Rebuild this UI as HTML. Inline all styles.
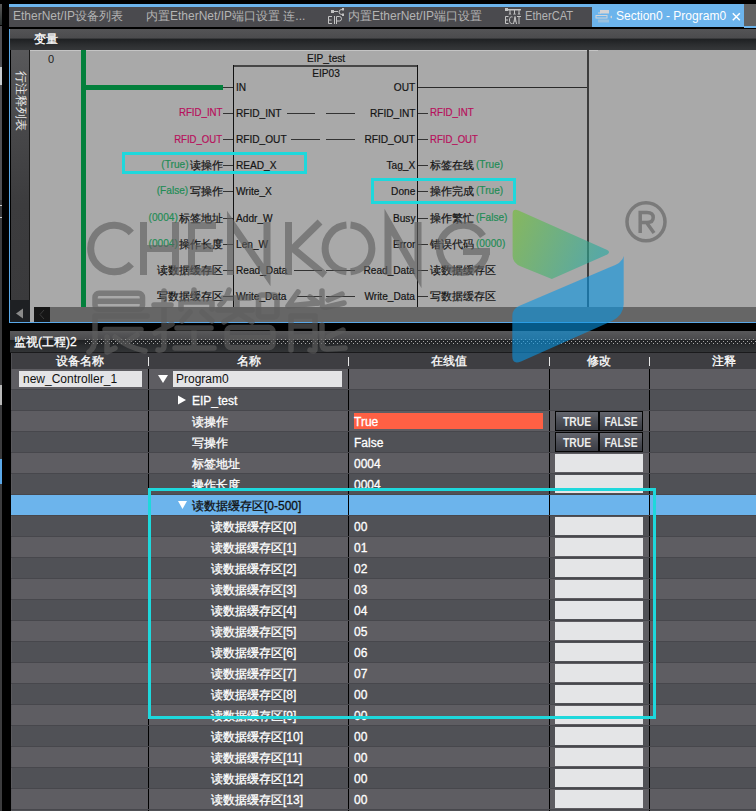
<!DOCTYPE html>
<html><head><meta charset="utf-8">
<style>
*{margin:0;padding:0;box-sizing:border-box}
html,body{width:756px;height:811px;overflow:hidden;background:#000}
body{position:relative;font-family:"Liberation Sans",sans-serif;font-size:12px}
.a{position:absolute}
.t{position:absolute;white-space:nowrap}
svg{position:absolute;left:0;top:0}
</style></head><body>
<div class="a" style="left:0px;top:0px;width:2px;height:811px;background:#3c3c3e;"></div>
<div class="a" style="left:0px;top:0px;width:2px;height:4px;background:#000;"></div>
<div class="a" style="left:0px;top:4px;width:2px;height:21px;background:linear-gradient(#5a5a5a,#2a3030);"></div>
<div class="a" style="left:0px;top:25px;width:2px;height:1px;background:#000;"></div>
<div class="a" style="left:0px;top:26px;width:2px;height:41px;background:#505054;"></div>
<div class="a" style="left:0px;top:67px;width:2px;height:18px;background:#c8ccd0;"></div>
<div class="a" style="left:0px;top:85px;width:2px;height:115px;background:#505054;"></div>
<div class="a" style="left:0px;top:385px;width:2px;height:20px;background:#b8b8b8;"></div>
<div class="a" style="left:0px;top:459px;width:2px;height:25px;background:#5aa8e8;"></div>
<div class="a" style="left:0px;top:205px;width:2px;height:1px;background:#d0d0d0;"></div>
<div class="a" style="left:0px;top:217px;width:2px;height:1px;background:#d0d0d0;"></div>
<div class="a" style="left:9px;top:4px;width:747px;height:3px;background:#6cb4ec;"></div>
<div class="a" style="left:9px;top:7px;width:747px;height:20px;background:#4a4a4e;"></div>
<div class="t" style="top:8.5px;color:#b4b4b4;font-size:12px;line-height:14px;left:13px;">EtherNet/IP设备列表</div>
<div class="t" style="top:8.5px;color:#b4b4b4;font-size:12px;line-height:14px;left:146px;">内置EtherNet/IP端口设置 连...</div>
<div class="t" style="top:8.5px;color:#b4b4b4;font-size:12px;line-height:14px;left:348px;">内置EtherNet/IP端口设置</div>
<div class="t" style="top:8.5px;color:#b4b4b4;font-size:12px;line-height:14px;left:525px;transform:scaleX(0.93);transform-origin:0 0;">EtherCAT</div>
<div class="a" style="left:592px;top:4px;width:152px;height:23px;background:#6cb4ec;"></div>
<div class="t" style="top:8.5px;color:#fff;font-size:12px;line-height:14px;left:616px;">Section0 - Program0</div>
<svg width="756" height="40" style="left:0;top:0"><path d="M732.8 13.2 L739.8 20.2 M739.8 13.2 L732.8 20.2" stroke="#fff" stroke-width="1.5"/></svg>
<svg width="756" height="30" style="left:0;top:0">
<g fill="#c4c4c4">
<rect x="331" y="10" width="3" height="3"/><rect x="334" y="11" width="4" height="1"/>
<rect x="342" y="8" width="2" height="2.5"/><rect x="342" y="13.5" width="2" height="2.5"/>
</g>
<g fill="none" stroke="#c4c4c4" stroke-width="1">
<path d="M342 9.5 Q339 9.5 339 12 Q339 14.5 342 14.5"/>
<path d="M332 16.5 H328.5 V23.5 H332 M328.5 20 H331.5 M334.5 16 V24 M336.5 24 V16.5 H339.5 Q341.5 16.5 341.5 18.75 Q341.5 21 339.5 21 H336.5"/>
</g>
<g fill="#c4c4c4">
<rect x="505" y="8" width="3" height="3"/><rect x="508" y="9" width="13" height="1.5"/>
<rect x="509.5" y="10" width="1" height="3"/><rect x="514" y="10" width="1" height="3"/><rect x="518.5" y="10" width="1" height="3"/>
<path d="M508.5 14.5 L510 12.5 L511.5 14.5 Z M513 14.5 L514.5 12.5 L516 14.5 Z M517.5 14.5 L519 12.5 L520.5 14.5 Z"/>
</g>
<g fill="none" stroke="#c4c4c4" stroke-width="1">
<path d="M508.5 16.5 H505.5 V23.5 H508.5 M505.5 20 H508 M512.5 17 Q509.5 16 509.5 20 Q509.5 24 512.5 23.5 M513.5 24 L515 16.5 L516.5 24 M514 21 H516 M517 16.5 H521 M519 16.5 V24"/>
</g>
<g fill="#d4d4d6">
<rect x="600" y="10" width="9" height="3.5"/><rect x="598" y="12.5" width="3" height="1"/>
<rect x="596" y="15.5" width="11" height="2.5" fill="none" stroke="#d4d4d6" stroke-width="1"/>
<path d="M610 17 L612 15.5 V18.5 Z"/>
<rect x="598" y="19.5" width="11" height="3" fill="#b8c8d4" opacity="0.6"/>
</g>
</svg>
<div class="a" style="left:9px;top:27px;width:747px;height:2px;background:#000;"></div>
<div class="a" style="left:744px;top:4px;width:12px;height:22px;background:#626262;"></div>
<div class="a" style="left:744px;top:26px;width:12px;height:1.5px;background:#6cb4ec;"></div>
<div class="a" style="left:9px;top:29px;width:1px;height:294px;background:#5aa8e8;"></div>
<div class="a" style="left:10px;top:29px;width:746px;height:21px;background:linear-gradient(#545456 0%,#4b4b4d 44%,#1e2022 47%,#2c2e30 75%,#353739 100%);"></div>
<div class="t" style="top:31.9px;color:#fff;font-size:12px;line-height:14px;left:34px;-webkit-text-stroke:0.3px currentColor;">变量</div>
<div class="a" style="left:11px;top:50px;width:18px;height:257px;background:linear-gradient(#59595b,#48484a 30%,#3c3c3e 60%,#3a3a3c);"></div>
<div class="a" style="left:29px;top:50px;width:1px;height:257px;background:#1a1a1a;"></div>
<div class="t" style="left:15px;top:70.5px;width:12px;height:12px;font-size:12px;line-height:12px;color:#e8e8e8;transform:rotate(90deg)">行</div>
<div class="t" style="left:15px;top:82.5px;width:12px;height:12px;font-size:12px;line-height:12px;color:#e8e8e8;transform:rotate(90deg)">注</div>
<div class="t" style="left:15px;top:94.5px;width:12px;height:12px;font-size:12px;line-height:12px;color:#e8e8e8;transform:rotate(90deg)">释</div>
<div class="t" style="left:15px;top:106.5px;width:12px;height:12px;font-size:12px;line-height:12px;color:#e8e8e8;transform:rotate(90deg)">列</div>
<div class="t" style="left:15px;top:118.5px;width:12px;height:12px;font-size:12px;line-height:12px;color:#e8e8e8;transform:rotate(90deg)">表</div>
<div class="a" style="left:30px;top:50px;width:726px;height:257px;background:#a9a9a9;"></div>
<div class="a" style="left:30px;top:50px;width:568px;height:1px;background:#c4c4c4;"></div>
<div class="a" style="left:10px;top:307px;width:746px;height:15px;background:#666666;"></div>
<div class="a" style="left:10px;top:300px;width:20px;height:22px;background:#1e2023;"></div>
<svg width="40" height="330" style="left:0;top:0"><path d="M16 313.5 L23 308.5 L23 318.5 Z" fill="#8a8a8a"/></svg>
<div class="a" style="left:30px;top:307px;width:4px;height:15px;background:#a9a9a9;"></div>
<div class="a" style="left:34px;top:307px;width:16px;height:15px;background:#161616;"></div>
<svg width="60" height="330" style="left:0;top:0"><path d="M44 310 L40 314.5 L44 319" fill="none" stroke="#3a3a3a" stroke-width="1"/></svg>
<div class="a" style="left:10px;top:322px;width:746px;height:1px;background:#5aa8e8;"></div>
<svg width="756" height="811"><rect x="81" y="50" width="5" height="257" fill="#03803c"/><rect x="86" y="85" width="137" height="5" fill="#03803c"/><rect x="233" y="65" width="185" height="2" fill="#464646"/><rect x="233" y="65" width="1" height="242" fill="#111"/><rect x="417" y="65" width="1" height="242" fill="#111"/><rect x="587" y="50" width="2" height="257" fill="#3c3c3c"/><rect x="418" y="87" width="169" height="1" fill="#2a2a2a"/><rect x="223" y="87" width="10" height="1" fill="#333"/><rect x="223" y="113" width="10" height="1" fill="#333"/><rect x="418" y="113" width="10" height="1" fill="#333"/><rect x="223" y="139" width="10" height="1" fill="#333"/><rect x="418" y="139" width="10" height="1" fill="#333"/><rect x="223" y="165" width="10" height="1" fill="#333"/><rect x="418" y="165" width="10" height="1" fill="#333"/><rect x="223" y="191" width="10" height="1" fill="#333"/><rect x="418" y="191" width="10" height="1" fill="#333"/><rect x="223" y="218" width="10" height="1" fill="#333"/><rect x="418" y="218" width="10" height="1" fill="#333"/><rect x="223" y="244" width="10" height="1" fill="#333"/><rect x="418" y="244" width="10" height="1" fill="#333"/><rect x="223" y="270" width="10" height="1" fill="#333"/><rect x="418" y="270" width="10" height="1" fill="#333"/><rect x="223" y="296" width="10" height="1" fill="#333"/><rect x="418" y="296" width="10" height="1" fill="#333"/><rect x="287" y="113" width="28" height="1" fill="#333"/><rect x="326" y="113" width="29" height="1" fill="#333"/><rect x="291" y="139" width="29" height="1" fill="#333"/><rect x="326" y="139" width="29" height="1" fill="#333"/><rect x="294" y="270" width="28" height="1" fill="#333"/><rect x="326" y="270" width="29" height="1" fill="#333"/><rect x="297" y="296" width="25" height="1" fill="#333"/><rect x="326" y="296" width="29" height="1" fill="#333"/></svg>
<div class="t" style="top:53.0px;color:#222;font-size:11px;line-height:13px;left:48px;">0</div>
<div class="t" style="top:52.0px;color:#141414;font-size:11px;line-height:13px;left:325.8px;width:0;display:flex;justify-content:center;transform:scaleX(0.92);-webkit-text-stroke:0.2px currentColor;">EIP_test</div>
<div class="t" style="top:67.0px;color:#141414;font-size:11px;line-height:13px;left:325.7px;width:0;display:flex;justify-content:center;transform:scaleX(0.92);-webkit-text-stroke:0.2px currentColor;">EIP03</div>
<div class="t" style="top:81.0px;color:#141414;font-size:11px;line-height:13px;left:236px;transform:scaleX(0.92);transform-origin:0 0;-webkit-text-stroke:0.2px currentColor;">IN</div>
<div class="t" style="top:107.0px;color:#141414;font-size:11px;line-height:13px;left:236px;transform:scaleX(0.92);transform-origin:0 0;-webkit-text-stroke:0.2px currentColor;">RFID_INT</div>
<div class="t" style="top:133.0px;color:#141414;font-size:11px;line-height:13px;left:236px;transform:scaleX(0.92);transform-origin:0 0;-webkit-text-stroke:0.2px currentColor;">RFID_OUT</div>
<div class="t" style="top:159.0px;color:#141414;font-size:11px;line-height:13px;left:236px;transform:scaleX(0.92);transform-origin:0 0;-webkit-text-stroke:0.2px currentColor;">READ_X</div>
<div class="t" style="top:185.0px;color:#141414;font-size:11px;line-height:13px;left:236px;transform:scaleX(0.92);transform-origin:0 0;-webkit-text-stroke:0.2px currentColor;">Write_X</div>
<div class="t" style="top:212.0px;color:#141414;font-size:11px;line-height:13px;left:236px;transform:scaleX(0.92);transform-origin:0 0;-webkit-text-stroke:0.2px currentColor;">Addr_W</div>
<div class="t" style="top:238.0px;color:#141414;font-size:11px;line-height:13px;left:236px;transform:scaleX(0.92);transform-origin:0 0;-webkit-text-stroke:0.2px currentColor;">Len_W</div>
<div class="t" style="top:264.0px;color:#141414;font-size:11px;line-height:13px;left:236px;transform:scaleX(0.92);transform-origin:0 0;-webkit-text-stroke:0.2px currentColor;">Read_Data</div>
<div class="t" style="top:290.0px;color:#141414;font-size:11px;line-height:13px;left:236px;transform:scaleX(0.92);transform-origin:0 0;-webkit-text-stroke:0.2px currentColor;">Write_Data</div>
<div class="t" style="top:81.0px;color:#141414;font-size:11px;line-height:13px;right:341px;transform:scaleX(0.92);transform-origin:100% 0;-webkit-text-stroke:0.2px currentColor;">OUT</div>
<div class="t" style="top:107.0px;color:#141414;font-size:11px;line-height:13px;right:341px;transform:scaleX(0.92);transform-origin:100% 0;-webkit-text-stroke:0.2px currentColor;">RFID_INT</div>
<div class="t" style="top:133.0px;color:#141414;font-size:11px;line-height:13px;right:341px;transform:scaleX(0.92);transform-origin:100% 0;-webkit-text-stroke:0.2px currentColor;">RFID_OUT</div>
<div class="t" style="top:159.0px;color:#141414;font-size:11px;line-height:13px;right:341px;transform:scaleX(0.92);transform-origin:100% 0;-webkit-text-stroke:0.2px currentColor;">Tag_X</div>
<div class="t" style="top:185.0px;color:#141414;font-size:11px;line-height:13px;right:341px;transform:scaleX(0.92);transform-origin:100% 0;-webkit-text-stroke:0.2px currentColor;">Done</div>
<div class="t" style="top:212.0px;color:#141414;font-size:11px;line-height:13px;right:341px;transform:scaleX(0.92);transform-origin:100% 0;-webkit-text-stroke:0.2px currentColor;">Busy</div>
<div class="t" style="top:238.0px;color:#141414;font-size:11px;line-height:13px;right:341px;transform:scaleX(0.92);transform-origin:100% 0;-webkit-text-stroke:0.2px currentColor;">Error</div>
<div class="t" style="top:264.0px;color:#141414;font-size:11px;line-height:13px;right:341px;transform:scaleX(0.92);transform-origin:100% 0;-webkit-text-stroke:0.2px currentColor;">Read_Data</div>
<div class="t" style="top:290.0px;color:#141414;font-size:11px;line-height:13px;right:341px;transform:scaleX(0.92);transform-origin:100% 0;-webkit-text-stroke:0.2px currentColor;">Write_Data</div>
<div class="t" style="top:106.0px;color:#b8105c;font-size:11px;line-height:13px;right:534px;transform:scaleX(0.88);transform-origin:100% 0;-webkit-text-stroke:0.2px currentColor;">RFID_INT</div>
<div class="t" style="top:133.0px;color:#b8105c;font-size:11px;line-height:13px;right:534px;transform:scaleX(0.87);transform-origin:100% 0;-webkit-text-stroke:0.2px currentColor;">RFID_OUT</div>
<div class="t" style="top:159.0px;color:#141414;font-size:11px;line-height:13px;right:533.5px;-webkit-text-stroke:0.2px currentColor;">读操作</div>
<div class="t" style="top:158.0px;color:#1f8c55;font-size:11px;line-height:13px;right:567.5px;transform:scaleX(0.92);transform-origin:100% 0;-webkit-text-stroke:0.2px currentColor;">(True)</div>
<div class="t" style="top:185.0px;color:#141414;font-size:11px;line-height:13px;right:533.5px;-webkit-text-stroke:0.2px currentColor;">写操作</div>
<div class="t" style="top:184.0px;color:#1f8c55;font-size:11px;line-height:13px;right:567.5px;transform:scaleX(0.92);transform-origin:100% 0;-webkit-text-stroke:0.2px currentColor;">(False)</div>
<div class="t" style="top:212.0px;color:#141414;font-size:11px;line-height:13px;right:533.5px;-webkit-text-stroke:0.2px currentColor;">标签地址</div>
<div class="t" style="top:211.0px;color:#1f8c55;font-size:11px;line-height:13px;right:578.5px;transform:scaleX(0.92);transform-origin:100% 0;-webkit-text-stroke:0.2px currentColor;">(0004)</div>
<div class="t" style="top:238.0px;color:#141414;font-size:11px;line-height:13px;right:533.5px;-webkit-text-stroke:0.2px currentColor;">操作长度</div>
<div class="t" style="top:237.0px;color:#1f8c55;font-size:11px;line-height:13px;right:578.5px;transform:scaleX(0.92);transform-origin:100% 0;-webkit-text-stroke:0.2px currentColor;">(0004)</div>
<div class="t" style="top:264.0px;color:#141414;font-size:11px;line-height:13px;right:533.5px;-webkit-text-stroke:0.2px currentColor;">读数据缓存区</div>
<div class="t" style="top:290.0px;color:#141414;font-size:11px;line-height:13px;right:533.5px;-webkit-text-stroke:0.2px currentColor;">写数据缓存区</div>
<div class="t" style="top:106.0px;color:#b8105c;font-size:11px;line-height:13px;left:430px;transform:scaleX(0.88);transform-origin:0 0;-webkit-text-stroke:0.2px currentColor;">RFID_INT</div>
<div class="t" style="top:133.0px;color:#b8105c;font-size:11px;line-height:13px;left:430px;transform:scaleX(0.87);transform-origin:0 0;-webkit-text-stroke:0.2px currentColor;">RFID_OUT</div>
<div class="t" style="top:159.0px;color:#141414;font-size:11px;line-height:13px;left:429.5px;-webkit-text-stroke:0.2px currentColor;">标签在线</div>
<div class="t" style="top:158.0px;color:#1f8c55;font-size:11px;line-height:13px;left:475.5px;transform:scaleX(0.92);transform-origin:0 0;-webkit-text-stroke:0.2px currentColor;">(True)</div>
<div class="t" style="top:185.0px;color:#141414;font-size:11px;line-height:13px;left:429.5px;-webkit-text-stroke:0.2px currentColor;">操作完成</div>
<div class="t" style="top:184.0px;color:#1f8c55;font-size:11px;line-height:13px;left:475.5px;transform:scaleX(0.92);transform-origin:0 0;-webkit-text-stroke:0.2px currentColor;">(True)</div>
<div class="t" style="top:212.0px;color:#141414;font-size:11px;line-height:13px;left:429.5px;-webkit-text-stroke:0.2px currentColor;">操作繁忙</div>
<div class="t" style="top:211.0px;color:#1f8c55;font-size:11px;line-height:13px;left:475.5px;transform:scaleX(0.92);transform-origin:0 0;-webkit-text-stroke:0.2px currentColor;">(False)</div>
<div class="t" style="top:238.0px;color:#141414;font-size:11px;line-height:13px;left:429.5px;-webkit-text-stroke:0.2px currentColor;">错误代码</div>
<div class="t" style="top:237.0px;color:#1f8c55;font-size:11px;line-height:13px;left:475.5px;transform:scaleX(0.92);transform-origin:0 0;-webkit-text-stroke:0.2px currentColor;">(0000)</div>
<div class="t" style="top:264.0px;color:#141414;font-size:11px;line-height:13px;left:429.5px;-webkit-text-stroke:0.2px currentColor;">读数据缓存区</div>
<div class="t" style="top:290.0px;color:#141414;font-size:11px;line-height:13px;left:429.5px;-webkit-text-stroke:0.2px currentColor;">写数据缓存区</div>
<div class="a" style="left:10px;top:323px;width:746px;height:8px;background:#000;"></div>
<div class="a" style="left:10px;top:331px;width:746px;height:21px;background:linear-gradient(#59595b 0%,#4a4a4c 41%,#1e2022 45%,#2a2c2e 72%,#323436 100%);"></div>
<svg width="756" height="811"><defs><pattern id="dots" x="85" y="339" width="4" height="4" patternUnits="userSpaceOnUse"><rect x="0" y="0" width="1" height="1" fill="#a8a8a8"/><rect x="2" y="2" width="1" height="1" fill="#a8a8a8"/></pattern></defs><rect x="85" y="339" width="671" height="5" fill="url(#dots)"/></svg>
<div class="t" style="top:335.2px;color:#fff;font-size:12px;line-height:14px;left:14px;-webkit-text-stroke:0.3px currentColor;">监视(工程)2</div>
<div class="a" style="left:10px;top:352px;width:746px;height:1px;background:#1a1a1c;"></div>
<div class="a" style="left:11px;top:353px;width:745px;height:16px;background:#3e3e42;"></div>
<div class="a" style="left:11px;top:353px;width:1px;height:16px;background:#4e4e52;"></div>
<div class="t" style="top:353.8px;color:#fff;font-size:12px;line-height:14px;left:80.4px;width:0;display:flex;justify-content:center;-webkit-text-stroke:0.3px currentColor;">设备名称</div>
<div class="t" style="top:353.8px;color:#fff;font-size:12px;line-height:14px;left:248.5px;width:0;display:flex;justify-content:center;-webkit-text-stroke:0.3px currentColor;">名称</div>
<div class="t" style="top:353.8px;color:#fff;font-size:12px;line-height:14px;left:448.7px;width:0;display:flex;justify-content:center;-webkit-text-stroke:0.3px currentColor;">在线值</div>
<div class="t" style="top:353.8px;color:#fff;font-size:12px;line-height:14px;left:598.5px;width:0;display:flex;justify-content:center;-webkit-text-stroke:0.3px currentColor;">修改</div>
<div class="t" style="top:353.8px;color:#fff;font-size:12px;line-height:14px;left:723.5px;width:0;display:flex;justify-content:center;-webkit-text-stroke:0.3px currentColor;">注释</div>
<div class="a" style="left:148px;top:357px;width:1px;height:9px;background:#e8e8e8;"></div>
<div class="a" style="left:348px;top:357px;width:1px;height:9px;background:#e8e8e8;"></div>
<div class="a" style="left:549px;top:357px;width:1px;height:9px;background:#e8e8e8;"></div>
<div class="a" style="left:649px;top:357px;width:1px;height:9px;background:#e8e8e8;"></div>
<div class="a" style="left:11px;top:369px;width:745px;height:20px;background:#5e5d62;"></div>
<div class="a" style="left:11px;top:369px;width:1px;height:20px;background:#5a5a5e;"></div>
<div class="a" style="left:148px;top:369px;width:1px;height:20px;background:#000;"></div>
<div class="a" style="left:348px;top:369px;width:1px;height:20px;background:#000;"></div>
<div class="a" style="left:549px;top:369px;width:1px;height:20px;background:#000;"></div>
<div class="a" style="left:649px;top:369px;width:1px;height:20px;background:#000;"></div>
<div class="a" style="left:11px;top:389px;width:745px;height:1px;background:#47474c;"></div>
<div class="a" style="left:11px;top:390px;width:745px;height:20px;background:#505156;"></div>
<div class="a" style="left:11px;top:390px;width:1px;height:20px;background:#5a5a5e;"></div>
<div class="a" style="left:148px;top:390px;width:1px;height:20px;background:#000;"></div>
<div class="a" style="left:348px;top:390px;width:1px;height:20px;background:#000;"></div>
<div class="a" style="left:549px;top:390px;width:1px;height:20px;background:#000;"></div>
<div class="a" style="left:649px;top:390px;width:1px;height:20px;background:#000;"></div>
<div class="a" style="left:11px;top:410px;width:745px;height:1px;background:#47474c;"></div>
<div class="a" style="left:11px;top:411px;width:745px;height:20px;background:#5e5d62;"></div>
<div class="a" style="left:11px;top:411px;width:1px;height:20px;background:#5a5a5e;"></div>
<div class="a" style="left:148px;top:411px;width:1px;height:20px;background:#000;"></div>
<div class="a" style="left:348px;top:411px;width:1px;height:20px;background:#000;"></div>
<div class="a" style="left:549px;top:411px;width:1px;height:20px;background:#000;"></div>
<div class="a" style="left:649px;top:411px;width:1px;height:20px;background:#000;"></div>
<div class="a" style="left:11px;top:431px;width:745px;height:1px;background:#47474c;"></div>
<div class="a" style="left:11px;top:432px;width:745px;height:20px;background:#505156;"></div>
<div class="a" style="left:11px;top:432px;width:1px;height:20px;background:#5a5a5e;"></div>
<div class="a" style="left:148px;top:432px;width:1px;height:20px;background:#000;"></div>
<div class="a" style="left:348px;top:432px;width:1px;height:20px;background:#000;"></div>
<div class="a" style="left:549px;top:432px;width:1px;height:20px;background:#000;"></div>
<div class="a" style="left:649px;top:432px;width:1px;height:20px;background:#000;"></div>
<div class="a" style="left:11px;top:452px;width:745px;height:1px;background:#47474c;"></div>
<div class="a" style="left:11px;top:453px;width:745px;height:20px;background:#5e5d62;"></div>
<div class="a" style="left:11px;top:453px;width:1px;height:20px;background:#5a5a5e;"></div>
<div class="a" style="left:148px;top:453px;width:1px;height:20px;background:#000;"></div>
<div class="a" style="left:348px;top:453px;width:1px;height:20px;background:#000;"></div>
<div class="a" style="left:549px;top:453px;width:1px;height:20px;background:#000;"></div>
<div class="a" style="left:649px;top:453px;width:1px;height:20px;background:#000;"></div>
<div class="a" style="left:11px;top:473px;width:745px;height:1px;background:#47474c;"></div>
<div class="a" style="left:11px;top:474px;width:745px;height:20px;background:#505156;"></div>
<div class="a" style="left:11px;top:474px;width:1px;height:20px;background:#5a5a5e;"></div>
<div class="a" style="left:148px;top:474px;width:1px;height:20px;background:#000;"></div>
<div class="a" style="left:348px;top:474px;width:1px;height:20px;background:#000;"></div>
<div class="a" style="left:549px;top:474px;width:1px;height:20px;background:#000;"></div>
<div class="a" style="left:649px;top:474px;width:1px;height:20px;background:#000;"></div>
<div class="a" style="left:11px;top:494px;width:745px;height:1px;background:#47474c;"></div>
<div class="a" style="left:11px;top:495px;width:745px;height:20px;background:#6cb4ec;"></div>
<div class="a" style="left:11px;top:495px;width:1px;height:20px;background:#6cb4ec;"></div>
<div class="a" style="left:148px;top:495px;width:1px;height:20px;background:#000;"></div>
<div class="a" style="left:348px;top:495px;width:1px;height:20px;background:#000;"></div>
<div class="a" style="left:549px;top:495px;width:1px;height:20px;background:#000;"></div>
<div class="a" style="left:649px;top:495px;width:1px;height:20px;background:#000;"></div>
<div class="a" style="left:11px;top:515px;width:745px;height:1px;background:#47474c;"></div>
<div class="a" style="left:11px;top:516px;width:745px;height:20px;background:#505156;"></div>
<div class="a" style="left:11px;top:516px;width:1px;height:20px;background:#5a5a5e;"></div>
<div class="a" style="left:148px;top:516px;width:1px;height:20px;background:#000;"></div>
<div class="a" style="left:348px;top:516px;width:1px;height:20px;background:#000;"></div>
<div class="a" style="left:549px;top:516px;width:1px;height:20px;background:#000;"></div>
<div class="a" style="left:649px;top:516px;width:1px;height:20px;background:#000;"></div>
<div class="a" style="left:11px;top:536px;width:745px;height:1px;background:#47474c;"></div>
<div class="a" style="left:11px;top:537px;width:745px;height:20px;background:#5e5d62;"></div>
<div class="a" style="left:11px;top:537px;width:1px;height:20px;background:#5a5a5e;"></div>
<div class="a" style="left:148px;top:537px;width:1px;height:20px;background:#000;"></div>
<div class="a" style="left:348px;top:537px;width:1px;height:20px;background:#000;"></div>
<div class="a" style="left:549px;top:537px;width:1px;height:20px;background:#000;"></div>
<div class="a" style="left:649px;top:537px;width:1px;height:20px;background:#000;"></div>
<div class="a" style="left:11px;top:557px;width:745px;height:1px;background:#47474c;"></div>
<div class="a" style="left:11px;top:558px;width:745px;height:20px;background:#505156;"></div>
<div class="a" style="left:11px;top:558px;width:1px;height:20px;background:#5a5a5e;"></div>
<div class="a" style="left:148px;top:558px;width:1px;height:20px;background:#000;"></div>
<div class="a" style="left:348px;top:558px;width:1px;height:20px;background:#000;"></div>
<div class="a" style="left:549px;top:558px;width:1px;height:20px;background:#000;"></div>
<div class="a" style="left:649px;top:558px;width:1px;height:20px;background:#000;"></div>
<div class="a" style="left:11px;top:578px;width:745px;height:1px;background:#47474c;"></div>
<div class="a" style="left:11px;top:579px;width:745px;height:20px;background:#5e5d62;"></div>
<div class="a" style="left:11px;top:579px;width:1px;height:20px;background:#5a5a5e;"></div>
<div class="a" style="left:148px;top:579px;width:1px;height:20px;background:#000;"></div>
<div class="a" style="left:348px;top:579px;width:1px;height:20px;background:#000;"></div>
<div class="a" style="left:549px;top:579px;width:1px;height:20px;background:#000;"></div>
<div class="a" style="left:649px;top:579px;width:1px;height:20px;background:#000;"></div>
<div class="a" style="left:11px;top:599px;width:745px;height:1px;background:#47474c;"></div>
<div class="a" style="left:11px;top:600px;width:745px;height:20px;background:#505156;"></div>
<div class="a" style="left:11px;top:600px;width:1px;height:20px;background:#5a5a5e;"></div>
<div class="a" style="left:148px;top:600px;width:1px;height:20px;background:#000;"></div>
<div class="a" style="left:348px;top:600px;width:1px;height:20px;background:#000;"></div>
<div class="a" style="left:549px;top:600px;width:1px;height:20px;background:#000;"></div>
<div class="a" style="left:649px;top:600px;width:1px;height:20px;background:#000;"></div>
<div class="a" style="left:11px;top:620px;width:745px;height:1px;background:#47474c;"></div>
<div class="a" style="left:11px;top:621px;width:745px;height:20px;background:#5e5d62;"></div>
<div class="a" style="left:11px;top:621px;width:1px;height:20px;background:#5a5a5e;"></div>
<div class="a" style="left:148px;top:621px;width:1px;height:20px;background:#000;"></div>
<div class="a" style="left:348px;top:621px;width:1px;height:20px;background:#000;"></div>
<div class="a" style="left:549px;top:621px;width:1px;height:20px;background:#000;"></div>
<div class="a" style="left:649px;top:621px;width:1px;height:20px;background:#000;"></div>
<div class="a" style="left:11px;top:641px;width:745px;height:1px;background:#47474c;"></div>
<div class="a" style="left:11px;top:642px;width:745px;height:20px;background:#505156;"></div>
<div class="a" style="left:11px;top:642px;width:1px;height:20px;background:#5a5a5e;"></div>
<div class="a" style="left:148px;top:642px;width:1px;height:20px;background:#000;"></div>
<div class="a" style="left:348px;top:642px;width:1px;height:20px;background:#000;"></div>
<div class="a" style="left:549px;top:642px;width:1px;height:20px;background:#000;"></div>
<div class="a" style="left:649px;top:642px;width:1px;height:20px;background:#000;"></div>
<div class="a" style="left:11px;top:662px;width:745px;height:1px;background:#47474c;"></div>
<div class="a" style="left:11px;top:663px;width:745px;height:20px;background:#5e5d62;"></div>
<div class="a" style="left:11px;top:663px;width:1px;height:20px;background:#5a5a5e;"></div>
<div class="a" style="left:148px;top:663px;width:1px;height:20px;background:#000;"></div>
<div class="a" style="left:348px;top:663px;width:1px;height:20px;background:#000;"></div>
<div class="a" style="left:549px;top:663px;width:1px;height:20px;background:#000;"></div>
<div class="a" style="left:649px;top:663px;width:1px;height:20px;background:#000;"></div>
<div class="a" style="left:11px;top:683px;width:745px;height:1px;background:#47474c;"></div>
<div class="a" style="left:11px;top:684px;width:745px;height:20px;background:#505156;"></div>
<div class="a" style="left:11px;top:684px;width:1px;height:20px;background:#5a5a5e;"></div>
<div class="a" style="left:148px;top:684px;width:1px;height:20px;background:#000;"></div>
<div class="a" style="left:348px;top:684px;width:1px;height:20px;background:#000;"></div>
<div class="a" style="left:549px;top:684px;width:1px;height:20px;background:#000;"></div>
<div class="a" style="left:649px;top:684px;width:1px;height:20px;background:#000;"></div>
<div class="a" style="left:11px;top:704px;width:745px;height:1px;background:#47474c;"></div>
<div class="a" style="left:11px;top:705px;width:745px;height:20px;background:#5e5d62;"></div>
<div class="a" style="left:11px;top:705px;width:1px;height:20px;background:#5a5a5e;"></div>
<div class="a" style="left:148px;top:705px;width:1px;height:20px;background:#000;"></div>
<div class="a" style="left:348px;top:705px;width:1px;height:20px;background:#000;"></div>
<div class="a" style="left:549px;top:705px;width:1px;height:20px;background:#000;"></div>
<div class="a" style="left:649px;top:705px;width:1px;height:20px;background:#000;"></div>
<div class="a" style="left:11px;top:725px;width:745px;height:1px;background:#47474c;"></div>
<div class="a" style="left:11px;top:726px;width:745px;height:20px;background:#505156;"></div>
<div class="a" style="left:11px;top:726px;width:1px;height:20px;background:#5a5a5e;"></div>
<div class="a" style="left:148px;top:726px;width:1px;height:20px;background:#000;"></div>
<div class="a" style="left:348px;top:726px;width:1px;height:20px;background:#000;"></div>
<div class="a" style="left:549px;top:726px;width:1px;height:20px;background:#000;"></div>
<div class="a" style="left:649px;top:726px;width:1px;height:20px;background:#000;"></div>
<div class="a" style="left:11px;top:746px;width:745px;height:1px;background:#47474c;"></div>
<div class="a" style="left:11px;top:747px;width:745px;height:20px;background:#5e5d62;"></div>
<div class="a" style="left:11px;top:747px;width:1px;height:20px;background:#5a5a5e;"></div>
<div class="a" style="left:148px;top:747px;width:1px;height:20px;background:#000;"></div>
<div class="a" style="left:348px;top:747px;width:1px;height:20px;background:#000;"></div>
<div class="a" style="left:549px;top:747px;width:1px;height:20px;background:#000;"></div>
<div class="a" style="left:649px;top:747px;width:1px;height:20px;background:#000;"></div>
<div class="a" style="left:11px;top:767px;width:745px;height:1px;background:#47474c;"></div>
<div class="a" style="left:11px;top:768px;width:745px;height:20px;background:#505156;"></div>
<div class="a" style="left:11px;top:768px;width:1px;height:20px;background:#5a5a5e;"></div>
<div class="a" style="left:148px;top:768px;width:1px;height:20px;background:#000;"></div>
<div class="a" style="left:348px;top:768px;width:1px;height:20px;background:#000;"></div>
<div class="a" style="left:549px;top:768px;width:1px;height:20px;background:#000;"></div>
<div class="a" style="left:649px;top:768px;width:1px;height:20px;background:#000;"></div>
<div class="a" style="left:11px;top:788px;width:745px;height:1px;background:#47474c;"></div>
<div class="a" style="left:11px;top:789px;width:745px;height:20px;background:#5e5d62;"></div>
<div class="a" style="left:11px;top:789px;width:1px;height:20px;background:#5a5a5e;"></div>
<div class="a" style="left:148px;top:789px;width:1px;height:20px;background:#000;"></div>
<div class="a" style="left:348px;top:789px;width:1px;height:20px;background:#000;"></div>
<div class="a" style="left:549px;top:789px;width:1px;height:20px;background:#000;"></div>
<div class="a" style="left:649px;top:789px;width:1px;height:20px;background:#000;"></div>
<div class="a" style="left:11px;top:809px;width:745px;height:1px;background:#47474c;"></div>
<div class="a" style="left:11px;top:810px;width:745px;height:20px;background:#505156;"></div>
<div class="a" style="left:11px;top:810px;width:1px;height:20px;background:#5a5a5e;"></div>
<div class="a" style="left:148px;top:810px;width:1px;height:20px;background:#000;"></div>
<div class="a" style="left:348px;top:810px;width:1px;height:20px;background:#000;"></div>
<div class="a" style="left:549px;top:810px;width:1px;height:20px;background:#000;"></div>
<div class="a" style="left:649px;top:810px;width:1px;height:20px;background:#000;"></div>
<div class="a" style="left:11px;top:830px;width:745px;height:1px;background:#47474c;"></div>
<div class="a" style="left:19px;top:371px;width:123px;height:16px;background:#e4e4e6;"></div>
<div class="t" style="top:372.0px;color:#111;font-size:12px;line-height:14px;left:23px;">new_Controller_1</div>
<svg width="756" height="811"><path d="M158 375 L168 375 L163 383 Z" fill="#fff"/><path d="M178 395.5 L186 400 L178 404.5 Z" fill="#fff"/><path d="M178 501 L187 501 L182.5 509 Z" fill="#fff"/></svg>
<div class="a" style="left:173px;top:371px;width:169px;height:16px;background:#e4e4e6;"></div>
<div class="t" style="top:372.0px;color:#111;font-size:12px;line-height:14px;left:176px;">Program0</div>
<div class="t" style="top:393.5px;color:#fff;font-size:12px;line-height:14px;left:192px;-webkit-text-stroke:0.3px currentColor;">EIP_test</div>
<div class="t" style="top:414.5px;color:#fff;font-size:12px;line-height:14px;left:192px;-webkit-text-stroke:0.3px currentColor;">读操作</div>
<div class="t" style="top:435.5px;color:#fff;font-size:12px;line-height:14px;left:192px;-webkit-text-stroke:0.3px currentColor;">写操作</div>
<div class="t" style="top:435.5px;color:#fff;font-size:12px;line-height:14px;left:354px;-webkit-text-stroke:0.3px currentColor;">False</div>
<div class="t" style="top:456.5px;color:#fff;font-size:12px;line-height:14px;left:192px;-webkit-text-stroke:0.3px currentColor;">标签地址</div>
<div class="t" style="top:456.5px;color:#fff;font-size:12px;line-height:14px;left:354px;-webkit-text-stroke:0.3px currentColor;">0004</div>
<div class="t" style="top:477.5px;color:#fff;font-size:12px;line-height:14px;left:192px;-webkit-text-stroke:0.3px currentColor;">操作长度</div>
<div class="t" style="top:477.5px;color:#fff;font-size:12px;line-height:14px;left:354px;-webkit-text-stroke:0.3px currentColor;">0004</div>
<div class="t" style="top:498.5px;color:#111;font-size:12px;line-height:14px;left:192px;-webkit-text-stroke:0.3px currentColor;">读数据缓存区[0-500]</div>
<div class="t" style="top:519.5px;color:#fff;font-size:12px;line-height:14px;left:211px;-webkit-text-stroke:0.3px currentColor;">读数据缓存区[0]</div>
<div class="t" style="top:519.5px;color:#fff;font-size:12px;line-height:14px;left:354px;-webkit-text-stroke:0.3px currentColor;">00</div>
<div class="t" style="top:540.5px;color:#fff;font-size:12px;line-height:14px;left:211px;-webkit-text-stroke:0.3px currentColor;">读数据缓存区[1]</div>
<div class="t" style="top:540.5px;color:#fff;font-size:12px;line-height:14px;left:354px;-webkit-text-stroke:0.3px currentColor;">01</div>
<div class="t" style="top:561.5px;color:#fff;font-size:12px;line-height:14px;left:211px;-webkit-text-stroke:0.3px currentColor;">读数据缓存区[2]</div>
<div class="t" style="top:561.5px;color:#fff;font-size:12px;line-height:14px;left:354px;-webkit-text-stroke:0.3px currentColor;">02</div>
<div class="t" style="top:582.5px;color:#fff;font-size:12px;line-height:14px;left:211px;-webkit-text-stroke:0.3px currentColor;">读数据缓存区[3]</div>
<div class="t" style="top:582.5px;color:#fff;font-size:12px;line-height:14px;left:354px;-webkit-text-stroke:0.3px currentColor;">03</div>
<div class="t" style="top:603.5px;color:#fff;font-size:12px;line-height:14px;left:211px;-webkit-text-stroke:0.3px currentColor;">读数据缓存区[4]</div>
<div class="t" style="top:603.5px;color:#fff;font-size:12px;line-height:14px;left:354px;-webkit-text-stroke:0.3px currentColor;">04</div>
<div class="t" style="top:624.5px;color:#fff;font-size:12px;line-height:14px;left:211px;-webkit-text-stroke:0.3px currentColor;">读数据缓存区[5]</div>
<div class="t" style="top:624.5px;color:#fff;font-size:12px;line-height:14px;left:354px;-webkit-text-stroke:0.3px currentColor;">05</div>
<div class="t" style="top:645.5px;color:#fff;font-size:12px;line-height:14px;left:211px;-webkit-text-stroke:0.3px currentColor;">读数据缓存区[6]</div>
<div class="t" style="top:645.5px;color:#fff;font-size:12px;line-height:14px;left:354px;-webkit-text-stroke:0.3px currentColor;">06</div>
<div class="t" style="top:666.5px;color:#fff;font-size:12px;line-height:14px;left:211px;-webkit-text-stroke:0.3px currentColor;">读数据缓存区[7]</div>
<div class="t" style="top:666.5px;color:#fff;font-size:12px;line-height:14px;left:354px;-webkit-text-stroke:0.3px currentColor;">07</div>
<div class="t" style="top:687.5px;color:#fff;font-size:12px;line-height:14px;left:211px;-webkit-text-stroke:0.3px currentColor;">读数据缓存区[8]</div>
<div class="t" style="top:687.5px;color:#fff;font-size:12px;line-height:14px;left:354px;-webkit-text-stroke:0.3px currentColor;">00</div>
<div class="t" style="top:708.5px;color:#fff;font-size:12px;line-height:14px;left:211px;-webkit-text-stroke:0.3px currentColor;">读数据缓存区[9]</div>
<div class="t" style="top:708.5px;color:#fff;font-size:12px;line-height:14px;left:354px;-webkit-text-stroke:0.3px currentColor;">00</div>
<div class="t" style="top:729.5px;color:#fff;font-size:12px;line-height:14px;left:211px;-webkit-text-stroke:0.3px currentColor;">读数据缓存区[10]</div>
<div class="t" style="top:729.5px;color:#fff;font-size:12px;line-height:14px;left:354px;-webkit-text-stroke:0.3px currentColor;">00</div>
<div class="t" style="top:750.5px;color:#fff;font-size:12px;line-height:14px;left:211px;-webkit-text-stroke:0.3px currentColor;">读数据缓存区[11]</div>
<div class="t" style="top:750.5px;color:#fff;font-size:12px;line-height:14px;left:354px;-webkit-text-stroke:0.3px currentColor;">00</div>
<div class="t" style="top:771.5px;color:#fff;font-size:12px;line-height:14px;left:211px;-webkit-text-stroke:0.3px currentColor;">读数据缓存区[12]</div>
<div class="t" style="top:771.5px;color:#fff;font-size:12px;line-height:14px;left:354px;-webkit-text-stroke:0.3px currentColor;">00</div>
<div class="t" style="top:792.5px;color:#fff;font-size:12px;line-height:14px;left:211px;-webkit-text-stroke:0.3px currentColor;">读数据缓存区[13]</div>
<div class="t" style="top:792.5px;color:#fff;font-size:12px;line-height:14px;left:354px;-webkit-text-stroke:0.3px currentColor;">00</div>
<div class="a" style="left:354px;top:413px;width:189px;height:16px;background:#ff6044;"></div>
<div class="t" style="top:414.5px;color:#fff;font-size:12px;line-height:14px;left:354px;-webkit-text-stroke:0.3px currentColor;">True</div>
<div class="a" style="left:555px;top:411px;width:88px;height:20px;background:#050505;"></div>
<div class="a" style="left:556px;top:412px;width:42px;height:18px;background:linear-gradient(#64666e,#4c4e56 50%,#3a3c44);"></div>
<div class="t" style="top:414.5px;color:#ececec;font-size:12px;line-height:14px;font-weight:bold;left:577px;width:0;display:flex;justify-content:center;transform:scaleX(0.86);">TRUE</div>
<div class="a" style="left:600px;top:412px;width:42px;height:18px;background:linear-gradient(#64666e,#4c4e56 50%,#3a3c44);"></div>
<div class="t" style="top:414.5px;color:#ececec;font-size:12px;line-height:14px;font-weight:bold;left:621px;width:0;display:flex;justify-content:center;transform:scaleX(0.86);">FALSE</div>
<div class="a" style="left:555px;top:432px;width:88px;height:20px;background:#050505;"></div>
<div class="a" style="left:556px;top:433px;width:42px;height:18px;background:linear-gradient(#64666e,#4c4e56 50%,#3a3c44);"></div>
<div class="t" style="top:435.5px;color:#ececec;font-size:12px;line-height:14px;font-weight:bold;left:577px;width:0;display:flex;justify-content:center;transform:scaleX(0.86);">TRUE</div>
<div class="a" style="left:600px;top:433px;width:42px;height:18px;background:linear-gradient(#64666e,#4c4e56 50%,#3a3c44);"></div>
<div class="t" style="top:435.5px;color:#ececec;font-size:12px;line-height:14px;font-weight:bold;left:621px;width:0;display:flex;justify-content:center;transform:scaleX(0.86);">FALSE</div>
<div class="a" style="left:555px;top:454px;width:88px;height:18px;background:#e4e5e7;"></div>
<div class="a" style="left:555px;top:475px;width:88px;height:18px;background:#e4e5e7;"></div>
<div class="a" style="left:555px;top:517px;width:88px;height:18px;background:#e4e5e7;"></div>
<div class="a" style="left:555px;top:538px;width:88px;height:18px;background:#e4e5e7;"></div>
<div class="a" style="left:555px;top:559px;width:88px;height:18px;background:#e4e5e7;"></div>
<div class="a" style="left:555px;top:580px;width:88px;height:18px;background:#e4e5e7;"></div>
<div class="a" style="left:555px;top:601px;width:88px;height:18px;background:#e4e5e7;"></div>
<div class="a" style="left:555px;top:622px;width:88px;height:18px;background:#e4e5e7;"></div>
<div class="a" style="left:555px;top:643px;width:88px;height:18px;background:#e4e5e7;"></div>
<div class="a" style="left:555px;top:664px;width:88px;height:18px;background:#e4e5e7;"></div>
<div class="a" style="left:555px;top:685px;width:88px;height:18px;background:#e4e5e7;"></div>
<div class="a" style="left:555px;top:706px;width:88px;height:18px;background:#e4e5e7;"></div>
<div class="a" style="left:555px;top:727px;width:88px;height:18px;background:#e4e5e7;"></div>
<div class="a" style="left:555px;top:748px;width:88px;height:18px;background:#e4e5e7;"></div>
<div class="a" style="left:555px;top:769px;width:88px;height:18px;background:#e4e5e7;"></div>
<div class="a" style="left:555px;top:790px;width:88px;height:18px;background:#e4e5e7;"></div>
<div class="a" style="left:555px;top:811px;width:88px;height:18px;background:#e4e5e7;"></div>
<svg width="756" height="811"><g opacity="0.63" fill="none" stroke="#5f5f5f" stroke-width="7" stroke-linecap="butt"><path d="M131.3 232.9 A23.3 23.3 0 1 0 131.3 264.1"/><path d="M143.5 222 V275 M175.5 222 V275 M147 248.5 H172"/><path d="M191.5 222 V275 M188 225.5 H216 M195 248.5 H213 M188 271.5 H216"/><path d="M230.5 275 V222 L267 275 V222" stroke-linejoin="miter"/><path d="M288.5 222 V275 M320 222 L293 248.5 L325 275"/><path d="M350.54 225.09 A23.4 23.4 0 0 1 350.54 271.71 M346.46 271.71 A23.4 23.4 0 0 1 346.46 225.09"/><path d="M388 275 V222 L418 275 V222"/><path d="M483.0 236.0 A23.6 23.6 0 1 0 486.6 251.5" /><path d="M463 251.5 H490"/><circle cx="646" cy="221.8" r="19" stroke-width="3.5"/><path d="M640.2 233 V212.6 H647 Q653.2 212.6 653.2 217.6 Q653.2 222.6 647 222.6 H640.2 M646.5 222.6 L654 233" stroke-width="3.5"/></g><g opacity="0.63" fill="none" stroke="#5f5f5f" stroke-width="5.5" stroke-linecap="round" stroke-linejoin="round"><rect x="95" y="293.2" width="47.5" height="16" rx="4"/><path d="M98 301.2 H140"/><path d="M95 316 H147 M95 316 V338 Q95 348 89 352 M105 329.5 H141 M107 337 V352 L115 348 M115 337 Q127 347 145 351 M137 335 L128 341"/><path d="M154 305 H171 M164 291 V346 Q164 351 158 350 M155 333 L172 324"/><path d="M194 290 V296 M181 309 V302 H212 V309 M190 312 L182 321 M202 312 L212 321 M177 328 H211 M194 331 V347 M175 348 H214"/><path d="M229 290 Q226 300 220 305 M223 298 H250 M237 298 V314 M218 310 H252 M237 314 L224 322 M240 314 L252 322"/><rect x="258.5" y="295" width="18.5" height="22" rx="3"/><rect x="227" y="327.5" width="46" height="20" rx="4"/><path d="M230 337.5 H270"/><path d="M298 292 L288 306 L318 303 M310 297 L318 303"/><path d="M291 350 V316 H315 V349 Q315 352 310 350 M293 326 H313 M293 337 H313"/><path d="M322 291 V304 Q322 308 327 307 L344 303 M342 294 L328 300"/><path d="M322 325 V344 Q322 349 327 349 L345 348 M343 330 L328 337"/></g><defs><linearGradient id="gg" x1="0" y1="0" x2="1" y2="0.3"><stop offset="0" stop-color="#72c030"/><stop offset="1" stop-color="#28a8a0"/></linearGradient></defs><path d="M512.6 214 Q512.6 207.8 518.5 210.5 L605 249 Q613 252 605 255.5 L551.8 279 L521 266.5 Q512.6 263 512.6 256 Z" fill="url(#gg)" opacity="0.62"/><path d="M623.7 256 Q623 263 608 268 L519 306 Q512.3 309 512.3 316 L512.3 356 Q512.3 365 521 361.5 L612 321 Q623.7 315 623.7 304 Z" fill="#0a96e3" opacity="0.6"/></svg>
<div class="a" style="left:122px;top:152px;width:185px;height:3px;background:#1ed8dc;"></div>
<div class="a" style="left:122px;top:171px;width:185px;height:3px;background:#1ed8dc;"></div>
<div class="a" style="left:122px;top:152px;width:3px;height:22px;background:#1ed8dc;"></div>
<div class="a" style="left:304px;top:152px;width:3px;height:22px;background:#1ed8dc;"></div>
<div class="a" style="left:371px;top:178px;width:145px;height:3px;background:#1ed8dc;"></div>
<div class="a" style="left:371px;top:201px;width:145px;height:3px;background:#1ed8dc;"></div>
<div class="a" style="left:371px;top:178px;width:3px;height:26px;background:#1ed8dc;"></div>
<div class="a" style="left:513px;top:178px;width:3px;height:26px;background:#1ed8dc;"></div>
<div class="a" style="left:148px;top:488px;width:508px;height:3px;background:#1ed8dc;"></div>
<div class="a" style="left:148px;top:716px;width:508px;height:3px;background:#1ed8dc;"></div>
<div class="a" style="left:148px;top:488px;width:3px;height:231px;background:#1ed8dc;"></div>
<div class="a" style="left:653px;top:488px;width:3px;height:231px;background:#1ed8dc;"></div>
</body></html>
